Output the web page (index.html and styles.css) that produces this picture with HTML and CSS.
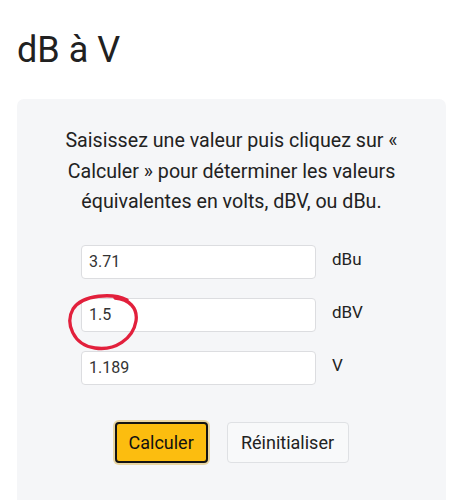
FILE: index.html
```html
<!DOCTYPE html>
<html lang="fr">
<head>
<meta charset="utf-8">
<link rel="stylesheet" href="styles.css">
</head>
<body>
<h1 class="title">dB à V</h1>
<div class="card">
  <p class="intro">Saisissez une valeur puis cliquez sur « Calculer » pour déterminer les valeurs équivalentes en volts, dBV, ou dBu.</p>
  <div class="fields">
    <div class="field"><input class="num" type="text" value="3.71"></div>
    <label class="unit">dBu</label>
    <div class="field">
      <input class="num" type="text" value="1.5">
      <svg class="scribble" width="80" height="62" viewBox="0 0 80 62">
        <path d="M62 7 C48 0 18 1 8 16 C0 30 8 52 30 55 C50 58 68 46 71 28 C73 15 64 6 50 5" fill="none" stroke="#e2203c" stroke-width="3.3" stroke-linecap="round"/>
      </svg>
    </div>
    <label class="unit">dBV</label>
    <div class="field"><input class="num" type="text" value="1.189"></div>
    <label class="unit">V</label>
  </div>
  <div class="actions">
    <button class="btn btn-primary">Calculer</button>
    <button class="btn btn-light">Réinitialiser</button>
  </div>
</div>
</body>
</html>
```

FILE: styles.css
```css
html, body {
  margin: 0;
  background: #ffffff;
}
body {
  padding: 0 18px 0 17px;
  font-family: Roboto, "Noto Sans", sans-serif;
  color: #222;
}
.title {
  margin: 0;
  padding-top: 29px;
  font-size: 36px;
  font-weight: 400;
  line-height: 43px;
  color: #212121;
}
.card {
  box-sizing: border-box;
  margin-top: 27px;
  background: #f5f6f8;
  border-radius: 7px 7px 0 0;
  padding: 27px 20px 0;
  height: 401px;
}
.intro {
  margin: 0 auto;
  width: 345px;
  text-align: center;
  font-size: 19.65px;
  line-height: 30.5px;
  color: #222;
}
.fields {
  margin-top: 27px;
  display: grid;
  grid-template-columns: 235px 50px;
  column-gap: 16px;
  row-gap: 19px;
  justify-content: center;
}
.field {
  position: relative;
}
.num {
  box-sizing: border-box;
  width: 235px;
  height: 34px;
  border: 1px solid #dcdde0;
  border-radius: 4px;
  background: #fff;
  padding: 0 7px;
  font-family: Roboto, "Noto Sans", sans-serif;
  font-size: 16px;
  color: #333;
  outline: none;
  display: block;
}
.unit {
  font-size: 17px;
  line-height: 20px;
  padding-top: 4px;
  color: #222;
}
.scribble {
  position: absolute;
  left: -16px;
  top: -5px;
  pointer-events: none;
}
.actions {
  margin-top: 37px;
  display: flex;
  justify-content: center;
  gap: 19px;
}
.btn {
  box-sizing: border-box;
  height: 41px;
  border-radius: 4px;
  font-family: Roboto, "Noto Sans", sans-serif;
  font-size: 18px;
  padding: 0 12px;
  cursor: pointer;
}
.btn-primary {
  width: 93px;
  background: #fcbd0f;
  color: #111;
  border: 2px solid #141414;
  box-shadow: 0 0 0 2px #e9d6a2;
}
.btn-light {
  width: 122px;
  background: #f8f9fa;
  color: #222;
  border: 1px solid #dfe1e4;
}
```
